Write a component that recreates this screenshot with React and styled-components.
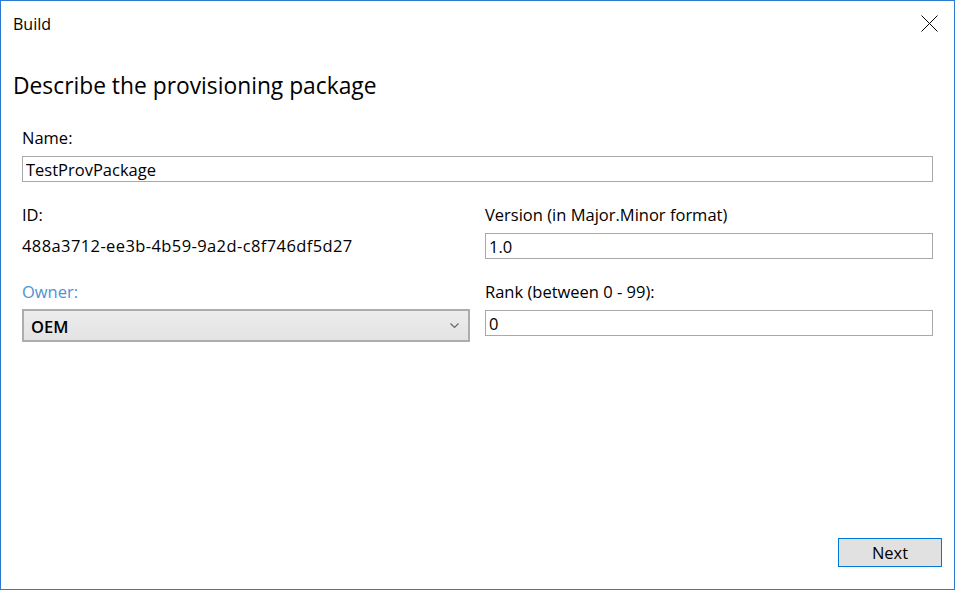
import React from "react";
import styled, { createGlobalStyle } from "styled-components";

const Global = createGlobalStyle`
  html, body { margin: 0; padding: 0; background: #fff; }
  body { font-family: "Open Sans", "Noto Sans", sans-serif; color: #000; }
  * { box-sizing: border-box; }
`;

const Window = styled.div`
  width: 955px;
  height: 590px;
  border: 1px solid #2b7bd3;
  background: #fff;
  display: flex;
  flex-direction: column;
`;

const TitleBar = styled.div`
  height: 45px;
  display: flex;
  align-items: center;
  justify-content: space-between;
  padding: 0 16px 0 12px;
`;

const TitleText = styled.span`
  font-size: 16px;
`;

const CloseButton = styled.button`
  width: 18px;
  height: 18px;
  border: 0;
  padding: 0;
  background: transparent;
  display: flex;
  align-items: center;
  justify-content: center;
`;

const Heading = styled.h1`
  margin: 25px 0 0 12px;
  font-size: 22.8px;
  font-weight: 400;
  line-height: 30px;
`;

const Form = styled.div`
  margin: 26px 21px 0 21px;
  display: grid;
  grid-template-columns: 1fr 1fr;
  column-gap: 15px;
  row-gap: 22px;
`;

const Field = styled.div`
  display: flex;
  flex-direction: column;
  grid-column: ${(p) => (p.$wide ? "1 / span 2" : "auto")};
`;

const Label = styled.label`
  font-size: 16.5px;
  line-height: 22px;
  height: 20px;
  margin-bottom: 9px;
  color: ${(p) => (p.$accent ? "#4d93d3" : "#000")};
`;

const TextBox = styled.div`
  height: 26px;
  border: 1px solid #a9a9a9;
  background: #fff;
  padding: 1px 3px 0;
  font-size: 16.5px;
  line-height: 24px;
`;

const ValueText = styled.div`
  height: 26px;
  line-height: 26px;
  font-size: 16.5px;
  letter-spacing: 0.4px;
`;

const Combo = styled.div`
  height: 33px;
  margin-top: -1px;
  border: 2px solid #adadad;
  background: linear-gradient(#ececec, #e3e3e3);
  display: flex;
  align-items: center;
  justify-content: space-between;
  padding: 1px 9px 0 7px;
  font-size: 16.5px;
  font-weight: 600;
`;

const Footer = styled.div`
  margin-top: auto;
  display: flex;
  justify-content: flex-end;
  padding: 0 12px 22px 0;
`;

const NextButton = styled.button`
  width: 104px;
  height: 29px;
  border: 1px solid #0078d7;
  background: #e1e1e1;
  font-family: inherit;
  font-size: 16.5px;
  color: #000;
  padding: 0;
`;

export default function App() {
  return (
    <>
      <Global />
      <Window>
        <TitleBar>
          <TitleText>Build</TitleText>
          <CloseButton aria-label="Close">
            <svg width="17" height="17" viewBox="0 0 17 17">
              <path d="M0.5 0.5 L16.5 16.5 M16.5 0.5 L0.5 16.5" stroke="#000" strokeWidth="1" fill="none" />
            </svg>
          </CloseButton>
        </TitleBar>
        <Heading>Describe the provisioning package</Heading>
        <Form>
          <Field $wide>
            <Label>Name:</Label>
            <TextBox>TestProvPackage</TextBox>
          </Field>
          <Field>
            <Label>ID:</Label>
            <ValueText>488a3712-ee3b-4b59-9a2d-c8f746df5d27</ValueText>
          </Field>
          <Field>
            <Label>Version (in Major.Minor format)</Label>
            <TextBox>1.0</TextBox>
          </Field>
          <Field>
            <Label $accent>Owner:</Label>
            <Combo>
              <span>OEM</span>
              <svg width="9" height="6" viewBox="0 0 9 6">
                <path d="M0.5 0.5 L4.5 4.5 L8.5 0.5" stroke="#666" strokeWidth="1.2" fill="none" />
              </svg>
            </Combo>
          </Field>
          <Field>
            <Label>Rank (between 0 - 99):</Label>
            <TextBox>0</TextBox>
          </Field>
        </Form>
        <Footer>
          <NextButton>Next</NextButton>
        </Footer>
      </Window>
    </>
  );
}
